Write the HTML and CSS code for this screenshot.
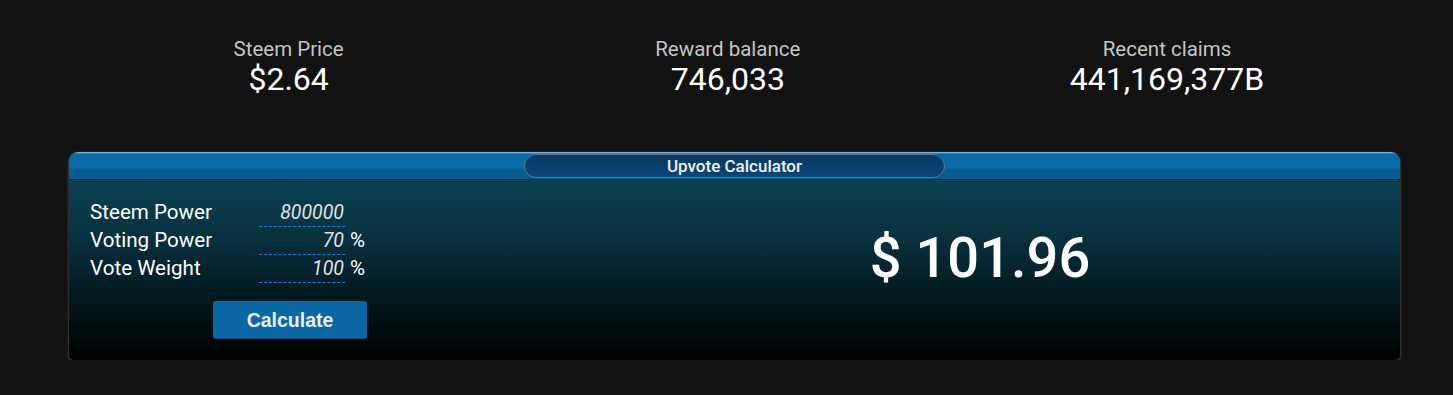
FILE: index.html
```html
<!DOCTYPE html>
<html lang="en">
<head>
<meta charset="utf-8">
<title>Upvote Calculator</title>
<link rel="stylesheet" href="styles.css">
</head>
<body>
<div class="page">
  <div class="stats">
    <div class="stat">
      <div class="stat-label">Steem Price</div>
      <div class="stat-value">$2.64</div>
    </div>
    <div class="stat">
      <div class="stat-label">Reward balance</div>
      <div class="stat-value">746,033</div>
    </div>
    <div class="stat">
      <div class="stat-label">Recent claims</div>
      <div class="stat-value">441,169,377B</div>
    </div>
  </div>

  <div class="card">
    <div class="card-header">
      <div class="card-title">Upvote Calculator</div>
    </div>
    <div class="card-body">
      <div class="form-col">
        <div class="form-grid">
          <div class="f-label">Steem Power</div>
          <div class="f-input">800000</div>
          <div class="f-unit"></div>

          <div class="f-label">Voting Power</div>
          <div class="f-input">70</div>
          <div class="f-unit">%</div>

          <div class="f-label">Vote Weight</div>
          <div class="f-input">100</div>
          <div class="f-unit">%</div>
        </div>
        <button class="calc-btn" type="button">Calculate</button>
      </div>
      <div class="result-col">
        <div class="result">$ 101.96</div>
      </div>
    </div>
  </div>
</div>
</body>
</html>
```

FILE: styles.css
```css
html, body {
  margin: 0;
  padding: 0;
  background: #121212;
}

body {
  font-family: Roboto, "Liberation Sans", Arial, sans-serif;
  color: #fff;
}

.page {
  width: 1331px;
  margin-left: 69px;
  padding-top: 37px;
}

.stats {
  display: flex;
}

.stat {
  width: 33%;
  text-align: center;
}

.stat-label {
  font-size: 20.5px;
  line-height: 24px;
  color: #c4c4c4;
}

.stat-value {
  font-size: 32px;
  line-height: 36px;
  color: #fff;
}

.card {
  margin-top: 55px;
  border-radius: 9px 9px 5px 5px;
  overflow: hidden;
  box-shadow: 0 1px 2px 1px rgba(90, 90, 90, 0.55);
  background: linear-gradient(to bottom, #0b4a5b 0%, #08313f 40%, #031419 75%, #000 100%);
}

.card-header {
  height: 28px;
  box-sizing: border-box;
  border-bottom: 1px solid #0c2736;
  background: linear-gradient(to bottom, #93c2de 0px, #5d9fcb 1px, #0a6aa7 2px, #0a6aa7 16px, #075b90 17px, #075a8e 27px);
  display: flex;
  justify-content: center;
  padding-top: 2px;
}

.card-title {
  width: 421px;
  height: 24px;
  box-sizing: border-box;
  border: 1px solid #5f7488;
  border-radius: 12px;
  background: linear-gradient(to bottom, #083a62 0%, #0a4677 100%);
  text-align: center;
  font-size: 17px;
  font-weight: 500;
  line-height: 22px;
  color: #f2f2f2;
}

.card-body {
  display: flex;
  height: 180px;
  box-sizing: border-box;
}

.form-col {
  width: 491px;
  padding: 19px 0 0 21px;
  box-sizing: border-box;
}

.form-grid {
  display: grid;
  grid-template-columns: 169px 86px auto;
  grid-auto-rows: 28px;
}

.f-label {
  font-size: 20.6px;
  line-height: 27px;
  color: #fff;
}

.f-input {
  font-size: 19.5px;
  line-height: 27px;
  font-style: italic;
  color: #e2e2e2;
  text-align: right;
  padding-right: 1px;
  border-bottom: 1px dashed #1a80dc;
}

.f-unit {
  font-size: 20.5px;
  line-height: 27px;
  color: #fff;
  padding-left: 5px;
}

.calc-btn {
  display: block;
  margin: 18px 0 0 123px;
  width: 154px;
  height: 38px;
  border: none;
  border-radius: 3px;
  background: #0a68a5;
  color: #eee;
  font-family: "Liberation Sans", Arial, sans-serif;
  font-weight: bold;
  font-size: 19.5px;
  padding: 0;
  box-shadow: inset 0 -1px 0 rgba(0, 0, 0, 0.25);
}

.result-col {
  flex: 1;
  text-align: center;
  padding-top: 46px;
}

.result {
  font-size: 56px;
  font-weight: 500;
  line-height: 64px;
  color: #fff;
}
```
